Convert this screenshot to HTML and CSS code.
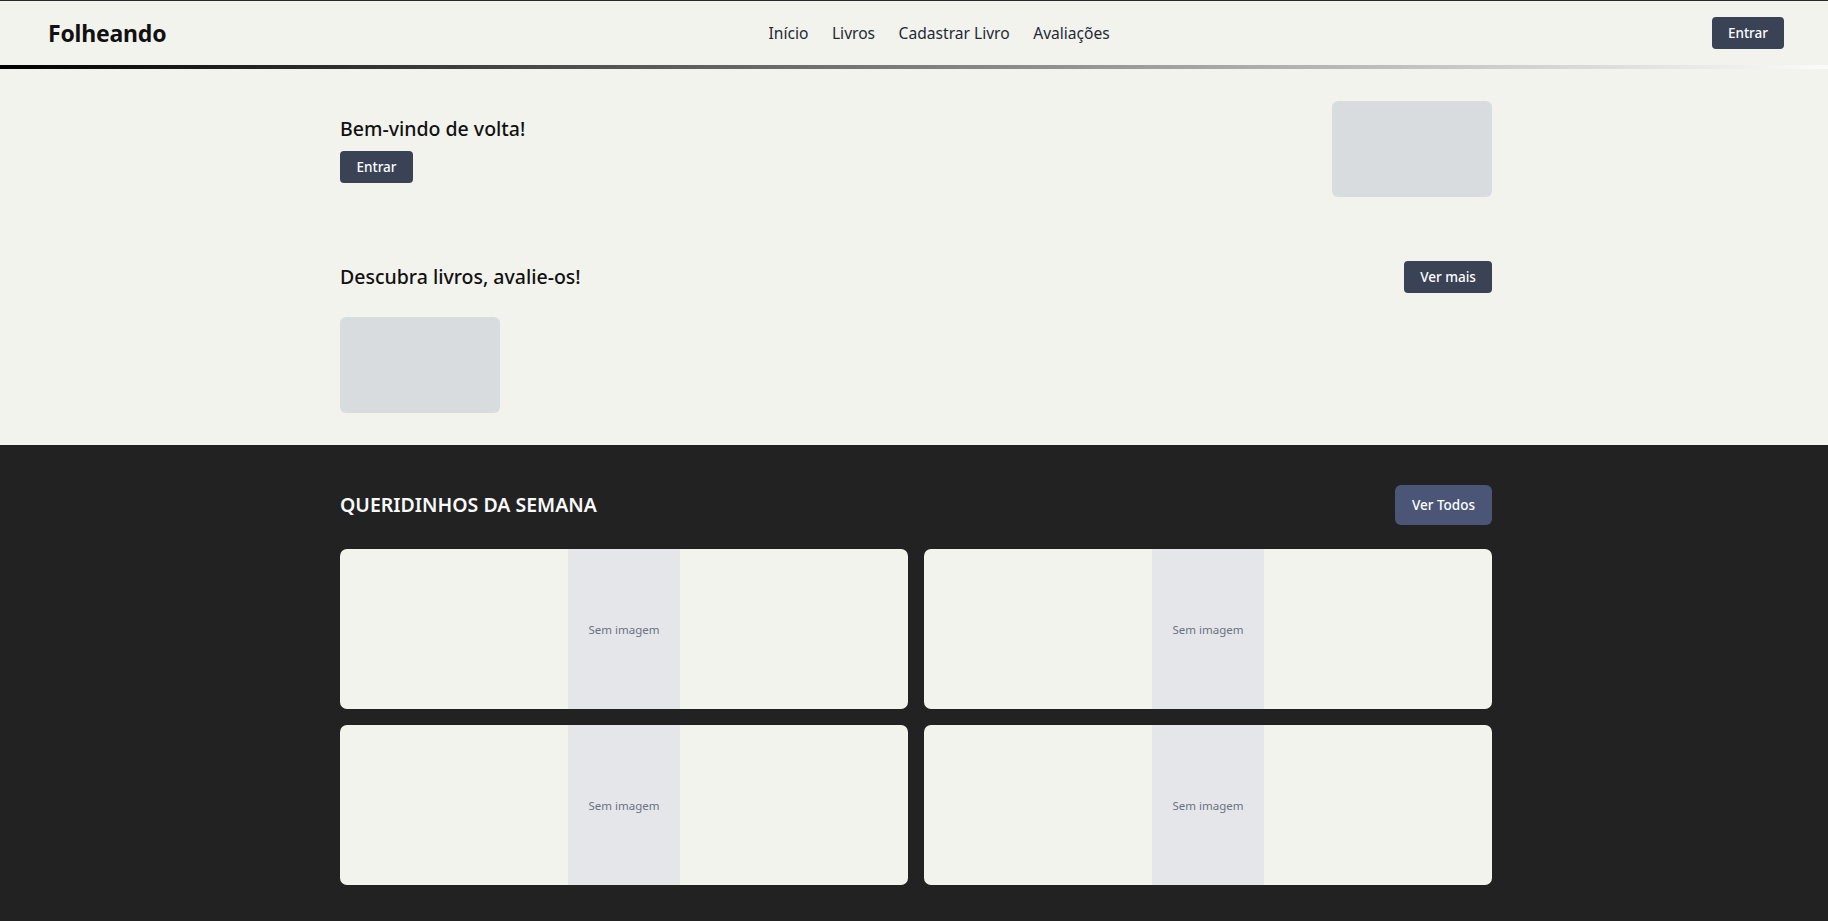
FILE: index.html
```html
<!DOCTYPE html>
<html lang="pt-BR">
<head>
<meta charset="utf-8">
<title>Folheando</title>
<link rel="stylesheet" href="styles.css">
</head>
<body>
<header class="site-header">
  <div class="brand">Folheando</div>
  <nav class="main-nav">
    <a href="#">Início</a>
    <a href="#">Livros</a>
    <a href="#">Cadastrar Livro</a>
    <a href="#">Avaliações</a>
  </nav>
  <button class="btn btn-dark">Entrar</button>
</header>
<div class="header-line"></div>

<section class="hero">
  <div class="container">
    <div class="welcome-row">
      <div class="welcome-text">
        <h2 class="title">Bem-vindo de volta!</h2>
        <button class="btn btn-dark">Entrar</button>
      </div>
      <div class="thumb"></div>
    </div>
    <div class="discover-row">
      <h2 class="title">Descubra livros, avalie-os!</h2>
      <button class="btn btn-dark btn-more">Ver mais</button>
    </div>
    <div class="thumb thumb-spaced"></div>
  </div>
</section>

<section class="favorites">
  <div class="container">
    <div class="fav-head">
      <h2 class="title title-light">QUERIDINHOS DA SEMANA</h2>
      <button class="btn btn-slate">Ver Todos</button>
    </div>
    <div class="card-grid">
      <div class="book-card"><div class="no-image">Sem imagem</div></div>
      <div class="book-card"><div class="no-image">Sem imagem</div></div>
      <div class="book-card"><div class="no-image">Sem imagem</div></div>
      <div class="book-card"><div class="no-image">Sem imagem</div></div>
    </div>
  </div>
</section>
</body>
</html>
```

FILE: styles.css
```css
* { box-sizing: border-box; }

html, body {
  margin: 0;
  padding: 0;
  background: #222222;
  font-family: "Noto Sans", "Open Sans", sans-serif;
}

.site-header {
  display: flex;
  align-items: center;
  justify-content: space-between;
  height: 65px;
  padding: 0 44px 0 48px;
  border-top: 1px solid #2a2a2a;
  background: #f3f3ee;
}

.brand {
  font-size: 23px;
  font-weight: 700;
  color: #111111;
  letter-spacing: -0.2px;
}

.main-nav {
  display: flex;
  gap: 23.5px;
}

.main-nav a {
  font-size: 15.6px;
  color: #1f2937;
  text-decoration: none;
}

.header-line {
  height: 4px;
  background: linear-gradient(to right, #000000, #fbfbfb);
}

.btn {
  display: inline-flex;
  align-items: center;
  justify-content: center;
  height: 32px;
  padding: 0 16px;
  border: none;
  border-radius: 4px;
  font-family: inherit;
  font-size: 13.5px;
  font-weight: 500;
  color: #ffffff;
  cursor: pointer;
}

.btn-dark { background: #3a4256; }

.btn-more { width: 88px; }

.btn-slate {
  height: 40px;
  width: 97px;
  border-radius: 6px;
  background: #4b5677;
}

.hero {
  background: #f3f3ee;
  padding: 32px 0 32px 4px;
}

.favorites {
  background: #222222;
  padding: 40px 0 40px 4px;
}

.container {
  width: 1152px;
  margin: 0 auto;
}

.title {
  margin: 0;
  font-size: 19.5px;
  line-height: 28px;
  font-weight: 500;
  color: #111111;
}

.title-light {
  color: #f9fafb;
  font-weight: 600;
}

.welcome-row {
  display: flex;
  align-items: center;
  justify-content: space-between;
}

.welcome-text {
  display: flex;
  flex-direction: column;
  align-items: flex-start;
  gap: 8px;
}

.welcome-text .btn { width: 73px; }

.thumb {
  width: 160px;
  height: 96px;
  border-radius: 6px;
  background: #d9dcdf;
}

.discover-row {
  display: flex;
  align-items: center;
  justify-content: space-between;
  margin-top: 64px;
}

.thumb-spaced { margin-top: 24px; }

.fav-head {
  display: flex;
  align-items: center;
  justify-content: space-between;
}

.card-grid {
  display: grid;
  grid-template-columns: 1fr 1fr;
  gap: 16px;
  margin-top: 24px;
}

.book-card {
  height: 160px;
  border-radius: 7px;
  background: #f3f3ee;
  overflow: hidden;
  display: flex;
  justify-content: center;
}

.no-image {
  width: 112px;
  background: #e5e6ea;
  display: flex;
  align-items: center;
  justify-content: center;
  font-size: 11.5px;
  color: #6b7280;
}
```
